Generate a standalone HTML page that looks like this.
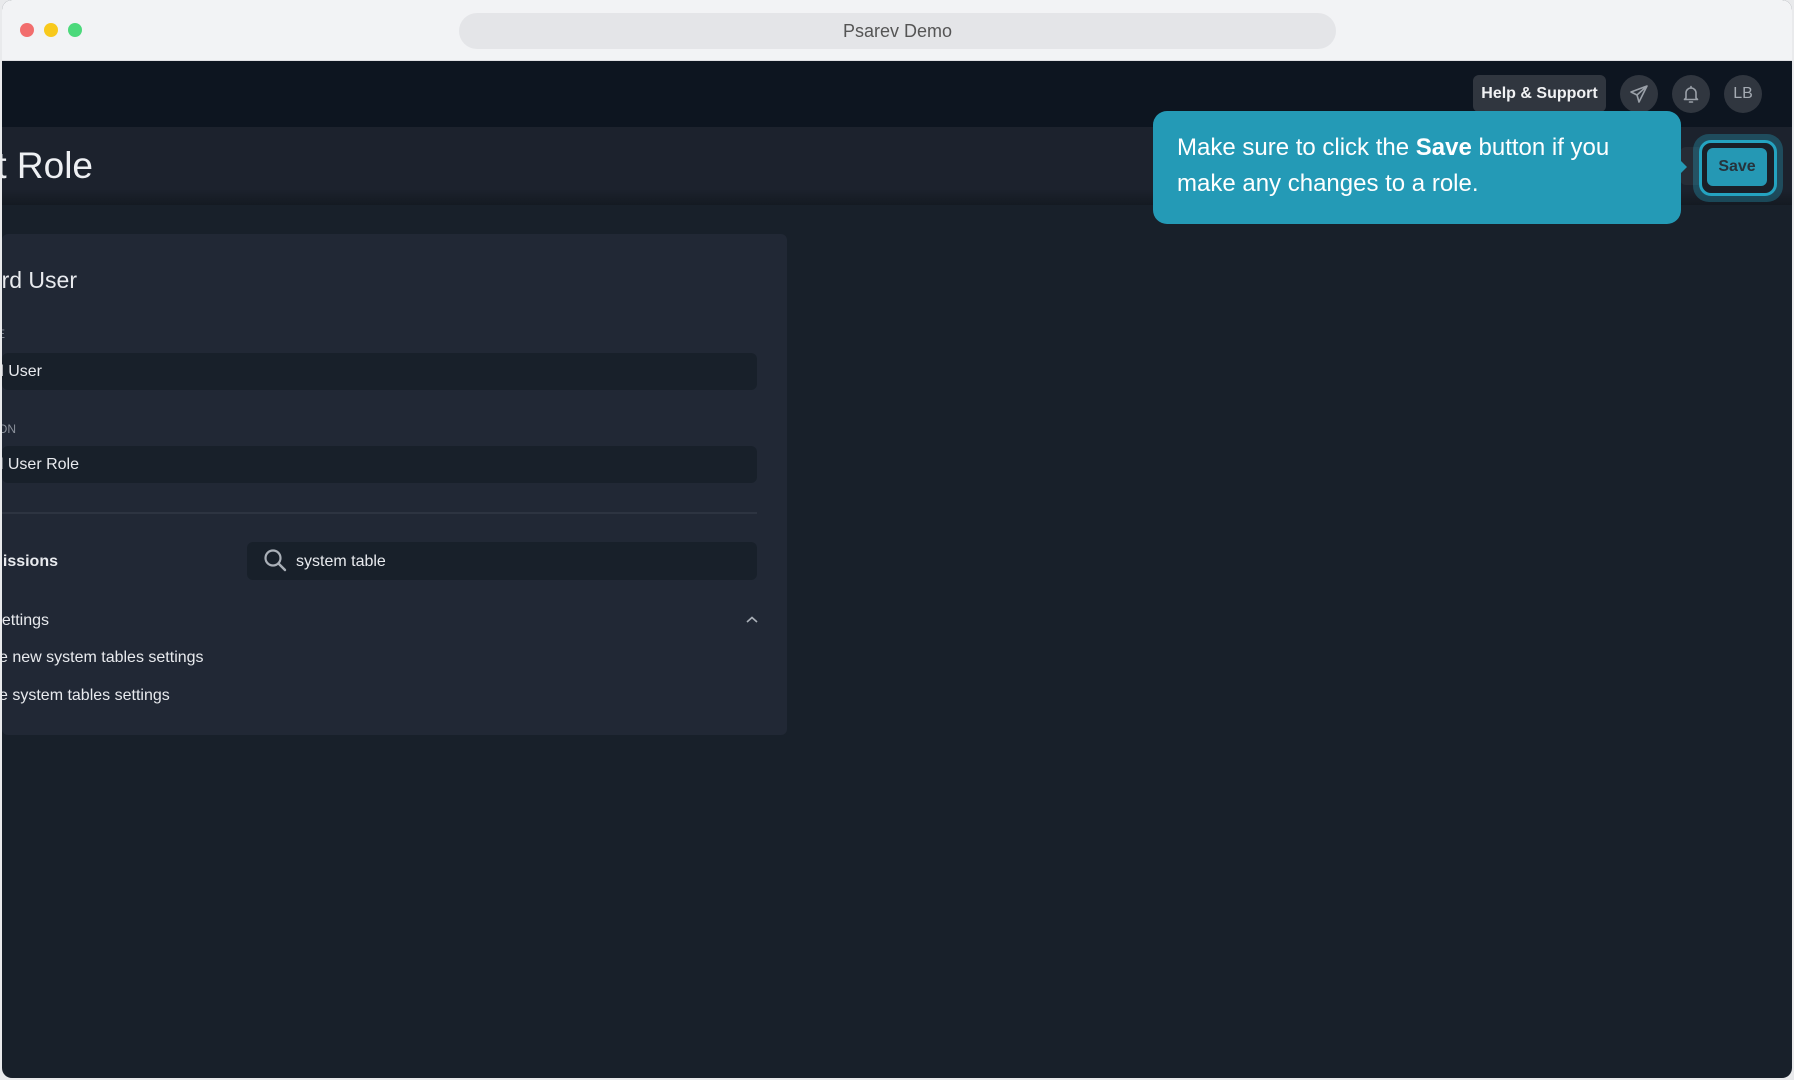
<!DOCTYPE html>
<html><head><meta charset="utf-8"><style>
*{margin:0;padding:0;box-sizing:border-box}
body{width:1794px;height:1080px;background:#e9eaec;font-family:"Liberation Sans",Arial,sans-serif;position:relative;overflow:hidden}
.a{position:absolute}
.win{left:2px;top:0;width:1790px;height:1078px;background:#18202a;border-radius:10px;overflow:hidden}
.r{text-align:right;white-space:nowrap}
</style></head><body>
<div class="a win">
  <div class="a" style="left:0;top:0;width:1790px;height:61px;background:#f2f3f5;border-bottom:1px solid #dfe0e3"></div>
  <div class="a" style="left:18px;top:23px;width:14px;height:14px;border-radius:50%;background:#f26d6d"></div>
  <div class="a" style="left:42px;top:23px;width:14px;height:14px;border-radius:50%;background:#f8c91c"></div>
  <div class="a" style="left:66px;top:23px;width:14px;height:14px;border-radius:50%;background:#4cd97b"></div>
  <div class="a" style="left:457px;top:13px;width:877px;height:36px;border-radius:18px;background:#e4e5e8;color:#555;font-size:18px;text-align:center;line-height:36px">Psarev Demo</div>
  <div class="a" style="left:0;top:61px;width:1790px;height:66px;background:#0d1520"></div>
  <div class="a" style="left:0;top:127px;width:1790px;height:78px;background:linear-gradient(#1c222d 80%,#141a22)"></div>
  <div class="a r" style="right:1699px;top:144px;font-size:37px;color:#eef0f3;line-height:44px">Edit Role</div>
  <div class="a" style="left:0;top:234px;width:785px;height:501px;background:#212835;border-radius:6px"></div>
  <div class="a r" style="right:1715px;top:267px;font-size:23px;color:#e8eaee">Standard User</div>
  <div class="a r" style="right:1787px;top:327px;font-size:12px;color:#8a909a">ROLE NAME</div>
  <div class="a" style="left:0;top:353px;width:755px;height:37px;background:#18202a;border-radius:6px"></div>
  <div class="a r" style="right:1750px;top:363px;font-size:16px;color:#e8eaee">Standard User</div>
  <div class="a r" style="right:1776px;top:422px;font-size:12px;color:#8a909a">DESCRIPTION</div>
  <div class="a" style="left:0;top:446px;width:755px;height:37px;background:#18202a;border-radius:6px"></div>
  <div class="a r" style="right:1713px;top:456px;font-size:16px;color:#e8eaee">Standard User Role</div>
  <div class="a" style="left:0;top:512px;width:755px;height:2px;background:#2d3441"></div>
  <div class="a r" style="right:1734px;top:553px;font-size:16px;font-weight:bold;color:#e8eaee">Permissions</div>
  <div class="a" style="left:245px;top:542px;width:510px;height:38px;background:#18202a;border-radius:6px"></div>
  <svg class="a" style="left:261px;top:548px" width="26" height="26" viewBox="0 0 26 26"><circle cx="10" cy="10" r="7.5" fill="none" stroke="#aab0b8" stroke-width="2.2"/><line x1="15.5" y1="15.5" x2="22" y2="22" stroke="#aab0b8" stroke-width="2.4" stroke-linecap="round"/></svg>
  <div class="a" style="left:294px;top:553px;font-size:16px;color:#e8eaee">system table</div>
  <div class="a r" style="right:1743px;top:612px;font-size:16px;color:#e8eaee">System Tables Settings</div>
  <svg class="a" style="left:743px;top:615px" width="14" height="10" viewBox="0 0 14 10"><path d="M2 7 L7 2.5 L12 7" fill="none" stroke="#aab0b8" stroke-width="1.6"/></svg>
  <div class="a" style="left:-3px;top:649px;font-size:16px;color:#e8eaee;white-space:nowrap">e new system tables settings</div>
  <div class="a" style="left:-3px;top:687px;font-size:16px;color:#e8eaee;white-space:nowrap">e system tables settings</div>
  <div class="a" style="left:1471px;top:75px;width:133px;height:37px;background:#30363f;border-radius:6px;color:#f1f2f4;font-weight:bold;font-size:16px;text-align:center;line-height:37px">Help &amp; Support</div>
  <div class="a" style="left:1618px;top:75px;width:38px;height:38px;border-radius:50%;background:#30363f"></div>
  <svg class="a" style="left:1626px;top:83px" width="22" height="22" viewBox="0 0 22 22"><path d="M19 3 L3 9 L9 12 L11 19 Z M9 12 L19 3" fill="none" stroke="#9aa0a8" stroke-width="1.6" stroke-linejoin="round"/></svg>
  <div class="a" style="left:1670px;top:75px;width:38px;height:38px;border-radius:50%;background:#30363f"></div>
  <svg class="a" style="left:1678px;top:83px" width="22" height="22" viewBox="0 0 22 22"><path d="M6 15 L6 10 A5 5 0 0 1 16 10 L16 15 L17.5 16.5 L4.5 16.5 Z" fill="none" stroke="#9aa0a8" stroke-width="1.6" stroke-linejoin="round"/><path d="M11 3.5 L11 5 M9.5 19 L12.5 19" stroke="#9aa0a8" stroke-width="1.6" stroke-linecap="round"/></svg>
  <div class="a" style="left:1722px;top:75px;width:38px;height:38px;border-radius:50%;background:#30363f;color:#a5abb3;font-size:16px;text-align:center;line-height:38px">LB</div>
  <div class="a" style="left:1678px;top:147px;width:26px;height:38px;background:#262c36;border-radius:6px"></div>
  <div class="a" style="left:1691px;top:134px;width:90px;height:68px;border-radius:16px;background:rgba(37,155,182,0.35)"></div>
  <div class="a" style="left:1697px;top:140px;width:78px;height:56px;border-radius:12px;border:3px solid #24a3c0;background:#1a1f27"></div>
  <div class="a" style="left:1705px;top:148px;width:60px;height:38px;border-radius:6px;background:#2598b4;color:#26333c;font-weight:bold;font-size:16px;text-align:center;line-height:38px">Save</div>
  <div class="a" style="left:1151px;top:111px;width:528px;height:113px;background:#249ab6;border-radius:14px"></div>
  <div class="a" style="left:1677px;top:159px;width:0;height:0;border-top:8px solid transparent;border-bottom:8px solid transparent;border-left:8px solid #249ab6"></div>
  <div class="a" style="left:1175px;top:130px;width:470px;font-size:24px;line-height:36px;color:#fff">Make sure to click the <b>Save</b> button if you make any changes to a role.</div>
</div>
</body></html>
